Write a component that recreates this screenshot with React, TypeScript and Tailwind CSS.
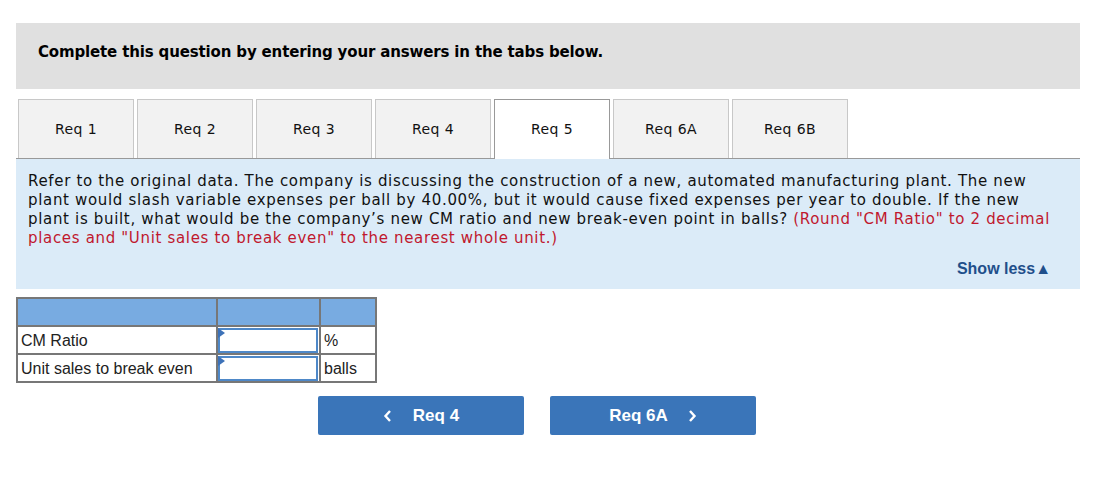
import React from "react";

const verdana = { fontFamily: '"DejaVu Sans", Verdana, sans-serif' };

export default function App() {
  const tabs = ["Req 1", "Req 2", "Req 3", "Req 4", "Req 5", "Req 6A", "Req 6B"];
  return (
    <div className="w-[1107px] h-[483px] bg-white pt-[23px] pl-4">
      <div className="w-[1064px]">
        <div
          className="h-[66px] bg-[#e0e0e0] pl-[22px] pt-[18px] text-[15px] font-bold text-black tracking-[-0.15px]"
          style={verdana}
        >
          Complete this question by entering your answers in the tabs below.
        </div>

        <div className="mt-[10px] flex items-end gap-[3px] pl-[2px] border-b border-[#999]">
          {tabs.map((t) =>
            t === "Req 5" ? (
              <div
                key={t}
                className="relative -mb-px h-[60px] w-[116px] bg-white border border-b-0 border-[#999] flex items-center justify-center text-[14px] tracking-[0.4px] text-[#111]"
                style={verdana}
              >
                <span className="-mt-px">{t}</span>
              </div>
            ) : (
              <div
                key={t}
                className="h-[59px] w-[116px] bg-[#f2f2f2] border border-b-0 border-[#c8c8c8] flex items-center justify-center text-[14px] tracking-[0.4px] text-[#111]"
                style={verdana}
              >
                {t}
              </div>
            )
          )}
        </div>

        <div className="bg-[#dbebf8] pl-[12px] pr-[20px] pt-[13px] pb-[11px]">
          <p className="text-[15px] leading-[19px] text-[#111] tracking-[0.67px] whitespace-nowrap" style={verdana}>
            Refer to the original data. The company is discussing the construction of a new, automated manufacturing plant. The new
            <br />
            plant would slash variable expenses per ball by 40.00%, but it would cause fixed expenses per year to double. If the new
            <br />
            plant is built, what would be the company’s new CM ratio and new break-even point in balls?{" "}
            <span className="text-[#c0182e]">(Round "CM Ratio" to 2 decimal</span>
            <br />
            <span className="text-[#c0182e]">places and "Unit sales to break even" to the nearest whole unit.)</span>
          </p>
          <div className="mt-[12px] flex justify-end pr-[9px]">
            <span
              className="text-[16px] font-bold text-[#1f4f8b] leading-[18px]"
              style={{ fontFamily: '"Liberation Sans", Arial, sans-serif' }}
            >
              Show less▲
            </span>
          </div>
        </div>

        <table
          className="mt-[8px] border-collapse text-[16px] text-[#222]"
          style={{ fontFamily: '"Liberation Sans", Arial, sans-serif' }}
        >
          <tbody>
            <tr className="h-[28px] bg-[#78abe1]">
              <td className="w-[200px] border-2 border-[#777]"></td>
              <td className="w-[103px] border-2 border-[#777]"></td>
              <td className="w-[56px] border-2 border-[#777]"></td>
            </tr>
            {[
              ["CM Ratio", "%"],
              ["Unit sales to break even", "balls"],
            ].map(([label, unit]) => (
              <tr key={label} className="h-[28px]">
                <td className="border-2 border-[#777] pl-[3px] pt-[1px] leading-[18px]">{label}</td>
                <td className="border-2 border-[#777] p-0">
                  <div className="relative h-[25px] w-[100px] border-2 border-[#4e88c8] bg-white">
                    <div className="absolute -left-[2px] -top-[2px] w-0 h-0 border-t-[5px] border-b-[5px] border-l-[7px] border-t-transparent border-b-transparent border-l-[#3d72b8]" />
                  </div>
                </td>
                <td className="border-2 border-[#777] pl-[3px] pt-[1px] leading-[18px]">{unit}</td>
              </tr>
            ))}
          </tbody>
        </table>

        <div
          className="mt-[13px] ml-[302px] flex gap-[26px]"
          style={{ fontFamily: '"Liberation Sans", Arial, sans-serif' }}
        >
          <div className="h-[39px] w-[206px] rounded-[2px] bg-[#3a75b9] flex items-center justify-center text-white text-[17px] font-bold">
            <svg width="10" height="14" viewBox="0 0 10 14" className="mr-[20px]">
              <path d="M7 2 L2.5 7 L7 12" stroke="white" strokeWidth="2.4" fill="none" />
            </svg>
            <span>Req 4</span>
          </div>
          <div className="h-[39px] w-[206px] rounded-[2px] bg-[#3a75b9] flex items-center justify-center text-white text-[17px] font-bold">
            <span>Req 6A</span>
            <svg width="10" height="14" viewBox="0 0 10 14" className="ml-[19px]">
              <path d="M3 2 L7.5 7 L3 12" stroke="white" strokeWidth="2.4" fill="none" />
            </svg>
          </div>
        </div>
      </div>
    </div>
  );
}
